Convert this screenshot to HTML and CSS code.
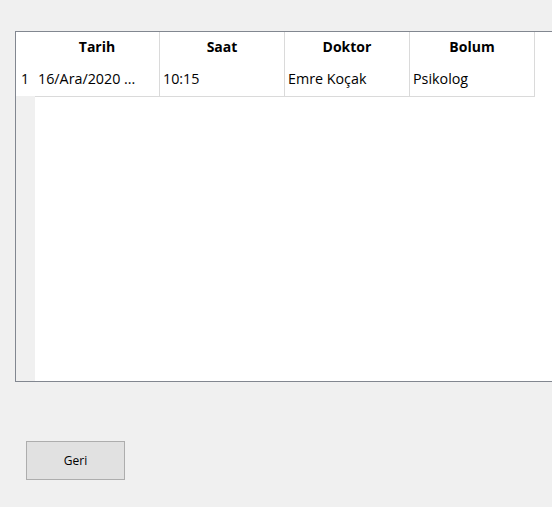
FILE: index.html
```html
<!DOCTYPE html>
<html lang="tr">
<head>
<meta charset="utf-8">
<link rel="stylesheet" href="styles.css">
</head>
<body>
<div class="grid">
  <div class="rowhead">
    <div class="corner"></div>
    <div class="rh">1</div>
  </div>
  <div class="table">
    <div class="hrow">
      <div class="hc">Tarih</div>
      <div class="hc">Saat</div>
      <div class="hc">Doktor</div>
      <div class="hc">Bolum</div>
    </div>
    <div class="drow">
      <div class="dc">16/Ara/2020 ...</div>
      <div class="dc">10:15</div>
      <div class="dc">Emre Koçak</div>
      <div class="dc">Psikolog</div>
    </div>
  </div>
</div>
<div class="actions">
  <button class="btn">Geri</button>
</div>
</body>
</html>
```
FILE: styles.css
```css
html, body {
  margin: 0;
  padding: 0;
  background: #f0f0f0;
  overflow: hidden;
  font-family: "Open Sans", "Noto Sans", sans-serif;
  color: #000;
}
body {
  width: 552px;
  height: 507px;
}
.grid {
  margin: 31px 0 0 15px;
  width: 560px;
  height: 349px;
  border: 1px solid #828790;
  background: #fff;
  display: flex;
}
.rowhead {
  width: 19px;
  background: #f0f0f0;
  display: flex;
  flex-direction: column;
}
.corner {
  height: 28px;
  background: #fff;
}
.rh {
  height: 36px;
  background: #fff;
  font-size: 14px;
  display: flex;
  align-items: center;
  justify-content: center;
  padding-right: 1px;
}
.table {
  display: flex;
  flex-direction: column;
}
.hrow, .drow {
  display: flex;
}
.hc {
  width: 124px;
  height: 28px;
  border-right: 1px solid #dadada;
  font-weight: 700;
  font-size: 14px;
  display: flex;
  align-items: center;
  justify-content: center;
}
.drow {
  border-bottom: 1px solid #dadada;
}
.dc {
  width: 121px;
  height: 36px;
  padding-left: 3px;
  border-right: 1px solid #dadada;
  font-size: 14.3px;
  display: flex;
  align-items: center;
  white-space: nowrap;
}
.actions {
  padding: 59px 0 0 26px;
}
.btn {
  width: 99px;
  height: 39px;
  background: #e1e1e1;
  border: 1px solid #adadad;
  font-family: "Open Sans", "Noto Sans", sans-serif;
  font-size: 12px;
  color: #000;
  padding: 0;
  margin: 0;
}
```
